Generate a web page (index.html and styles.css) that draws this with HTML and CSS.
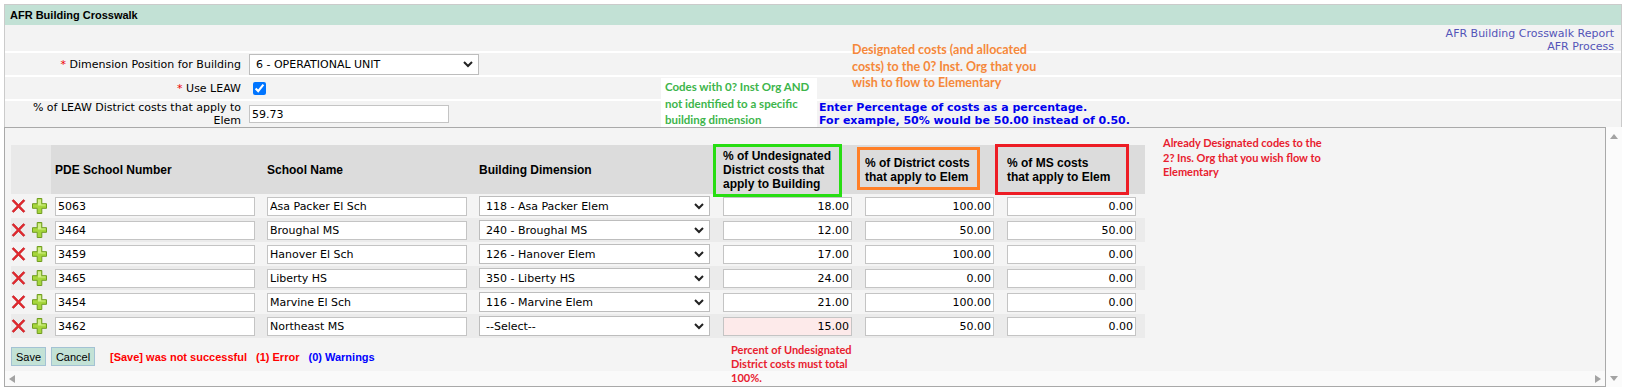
FILE: index.html
```html
<!DOCTYPE html>
<html lang="en">
<head>
  <meta charset="UTF-8" />
  <meta name="viewport" content="width=device-width, initial-scale=1.0"/>
  <title>AFR Building Crosswalk</title>
  <link rel="stylesheet" href="styles.css">
</head>
<body>
  <div class="page">

    <!-- Top form -->
    <div class="top">
      <div class="title">AFR Building Crosswalk</div>
      <div class="links">
        <a href="#">AFR Building Crosswalk Report</a><br>
        <a href="#">AFR Process</a>
      </div>
      <div class="frow row-sel">
        <label class="flabel"><span class="req">*</span> Dimension Position for Building</label>
        <div class="fctl">
          <div class="sel sel-wide">
            <select><option>6 - OPERATIONAL UNIT</option></select>
            <svg class="chev" width="10" height="7" viewBox="0 0 10 7"><polyline points="1,1 5,5 9,1" fill="none" stroke="#222" stroke-width="2"/></svg>
          </div>
        </div>
      </div>
      <div class="frow row-chk">
        <label class="flabel"><span class="req">*</span> Use LEAW</label>
        <div class="fctl"><input type="checkbox" checked></div>
      </div>
      <div class="frow row-pct">
        <label class="flabel">% of LEAW District costs that apply to Elem</label>
        <div class="fctl"><input type="text" class="txt leaw" value="59.73"></div>
        <div class="hint">Enter Percentage of costs as a percentage.<br>For example, 50% would be 50.00 instead of 0.50.</div>
      </div>
    </div>

    <!-- Grid -->
    <div class="grid-section">
      <div class="grid">
        <table class="grid-table">
          <colgroup>
            <col style="width:40px"><col style="width:212px"><col style="width:212px"><col style="width:244px">
            <col style="width:142px"><col style="width:142px"><col style="width:142px">
          </colgroup>
          <thead>
            <tr>
              <th class="th-icons"></th>
              <th>PDE School Number</th>
              <th>School Name</th>
              <th>Building Dimension</th>
              <th>% of Undesignated<br>District costs that<br>apply to Building</th>
              <th>% of District costs<br>that apply to Elem</th>
              <th>% of MS costs<br>that apply to Elem</th>
            </tr>
          </thead>
          <tbody id="rows"></tbody>
        </table>

        <div class="actions">
          <button class="btn btn-save">Save</button>
          <button class="btn btn-cancel">Cancel</button>
          <span class="msg">
            <span class="err">[Save] was not successful</span>
            <span class="err">(1) Error</span>
            <span class="warn">(0) Warnings</span>
          </span>
        </div>

        <div class="hscroll">
          <span class="tri tri-left"></span>
          <span class="tri tri-right"></span>
        </div>
      </div>
      <div class="vscroll">
        <span class="tri tri-up"></span>
        <span class="tri tri-down"></span>
      </div>
    </div>

    <!-- annotations pasted over the screen -->
    <div class="note note-orange">Designated costs (and allocated<br>costs) to the 0? Inst. Org that you<br>wish to flow to Elementary</div>
    <div class="note note-green">Codes with 0? Inst Org AND<br>not identified to a specific<br>building dimension</div>
    <div class="note note-red">Already Designated codes to the<br>2? Ins. Org that you wish flow to<br>Elementary</div>
    <div class="note note-error">Percent of Undesignated<br>District costs must total<br>100%.</div>
    <div class="hbox hbox-green"></div>
    <div class="hbox hbox-orange"></div>
    <div class="hbox hbox-red"></div>
  </div>

  <script>
    const rows = [
      ['5063', 'Asa Packer El Sch', '118 - Asa Packer Elem', '18.00', '100.00', '0.00'],
      ['3464', 'Broughal MS', '240 - Broughal MS', '12.00', '50.00', '50.00'],
      ['3459', 'Hanover El Sch', '126 - Hanover Elem', '17.00', '100.00', '0.00'],
      ['3465', 'Liberty HS', '350 - Liberty HS', '24.00', '0.00', '0.00'],
      ['3454', 'Marvine El Sch', '116 - Marvine Elem', '21.00', '100.00', '0.00'],
      ['3462', 'Northeast MS', '--Select--', '15.00', '50.00', '0.00']
    ];

    const delIcon = '<svg width="15" height="14" viewBox="0 0 15 14"><path d="M1 1.8 L2.6 0.6 L7.5 5.6 L12.4 0.6 L14 1.8 L8.9 7 L14 12.2 L12.4 13.4 L7.5 8.4 L2.6 13.4 L1 12.2 L6.1 7 Z" fill="#e3282e" stroke="#b8161c" stroke-width="0.5"/></svg>';
    const addIcon = '<svg width="15" height="16" viewBox="0 0 15 16"><path d="M5.2 0.5 H9.8 V5.7 H14.5 V10.3 H9.8 V15.5 H5.2 V10.3 H0.5 V5.7 H5.2 Z" fill="#a6d63c" stroke="#6f9c1f" stroke-width="1"/><path d="M6 1.5 H9 V6.5 H13.5 V7.6 H6 Z" fill="#d2ef8a"/></svg>';
    const chev = '<svg class="chev" width="10" height="7" viewBox="0 0 10 7"><polyline points="1,1 5,5 9,1" fill="none" stroke="#222" stroke-width="2"/></svg>';

    const tbody = document.getElementById('rows');
    rows.forEach((r, i) => {
      const tr = document.createElement('tr');
      const bad = i === rows.length - 1 ? ' bad' : '';
      tr.innerHTML =
        '<td><div class="icons">' + delIcon + addIcon + '</div></td>' +
        '<td><input type="text" class="txt cell-txt" value="' + r[0] + '"></td>' +
        '<td><input type="text" class="txt cell-txt" value="' + r[1] + '"></td>' +
        '<td><div class="sel sel-cell"><select><option>' + r[2] + '</option></select>' + chev + '</div></td>' +
        '<td><input type="text" class="txt num' + bad + '" value="' + r[3] + '"></td>' +
        '<td><input type="text" class="txt num" value="' + r[4] + '"></td>' +
        '<td><input type="text" class="txt num" value="' + r[5] + '"></td>';
      tbody.appendChild(tr);
    });
  </script>
</body>
</html>
```

FILE: styles.css
```css
body {
  margin: 0;
  font-family: "DejaVu Sans", Verdana, sans-serif;
  font-size: 11px;
  color: #000;
  background: #fff;
}

.page {
  position: relative;
  margin: 4px 4px 0 4px;
}

/* top form */
.top {
  border: 1px solid #cbcbcb;
  border-bottom: none;
  background: #f3f3f3;
}

.title {
  height: 20px;
  line-height: 20px;
  padding-left: 5px;
  background: #c2e1d5;
  font-family: "Liberation Sans", Arial, sans-serif;
  font-weight: bold;
  font-size: 11px;
}

.links {
  height: 24px;
  padding: 2px 7px 0 0;
  text-align: right;
  line-height: 13px;
}

.links a {
  color: #5353b8;
  text-decoration: none;
}

.frow {
  display: grid;
  grid-template-columns: 244px 570px auto;
  align-items: center;
  border-top: 2px solid #fff;
}

.row-sel, .row-chk {
  height: 22px;
}

.row-pct {
  height: 26px;
}

.flabel {
  text-align: right;
  padding-right: 8px;
  line-height: 13px;
}

.req {
  color: #e00;
}

.fctl {
  display: flex;
  align-items: center;
}

.fctl input[type="checkbox"] {
  width: 13px;
  height: 13px;
  margin: 0 0 0 4px;
  accent-color: #0075ff;
}

.hint {
  color: #0000ee;
  font-weight: bold;
  line-height: 13px;
  white-space: nowrap;
}

/* inputs */
.txt {
  box-sizing: border-box;
  height: 19px;
  border: 1px solid #c4c4c4;
  padding: 0 2px;
  font-family: "DejaVu Sans", Verdana, sans-serif;
  font-size: 11px;
  color: #000;
  background: #fff;
  outline: none;
}

.leaw {
  width: 200px;
  height: 18px;
}

.cell-txt {
  width: 200px;
  display: block;
}

.num {
  width: 129px;
  text-align: right;
  display: block;
}

.num.bad {
  background: #fdeaea;
}

.sel {
  position: relative;
  display: inline-block;
}

.sel select {
  appearance: none;
  -webkit-appearance: none;
  box-sizing: border-box;
  border: 1px solid #bdbdbd;
  border-radius: 0;
  background: #fff;
  padding: 0 0 0 6px;
  font-family: "DejaVu Sans", Verdana, sans-serif;
  font-size: 11px;
  color: #000;
  display: block;
}

.sel-wide select {
  width: 230px;
  height: 21px;
}

.sel-cell select {
  width: 231px;
  height: 20px;
}

.chev {
  position: absolute;
  right: 6px;
  top: 7px;
  pointer-events: none;
}

/* grid */
.grid-section {
  display: flex;
}

.grid {
  flex: 1;
  border: 1px solid #a9a9a9;
  background: #f4f4f4;
  padding-top: 17px;
}

.grid-table {
  margin-left: 6px;
  border-collapse: collapse;
  table-layout: fixed;
  width: 1134px;
}

.grid-table th {
  height: 49px;
  padding: 0 4px;
  background: #dcdcdc;
  text-align: left;
  vertical-align: middle;
  font-family: "Liberation Sans", Arial, sans-serif;
  font-size: 12px;
  font-weight: bold;
  line-height: 14px;
}

.grid-table th.th-icons {
  background: #e9e9e9;
}

.grid-table td {
  height: 24px;
  padding: 0 4px;
  vertical-align: middle;
}

.grid-table td:first-child {
  padding: 0;
}

.grid-table tbody tr:nth-child(even) td {
  background: #ebebeb;
}

.icons {
  display: flex;
  align-items: center;
  gap: 6px;
}

.actions {
  display: flex;
  align-items: center;
  margin: 9px 0 0 6px;
  height: 19px;
}

.btn {
  box-sizing: border-box;
  height: 19px;
  padding: 0;
  border: 1px solid #a3c2d4;
  background: #c3e2d6;
  font-family: "Liberation Sans", Arial, sans-serif;
  font-size: 11px;
  color: #000;
}

.btn-save {
  width: 35px;
}

.btn-cancel {
  width: 44px;
  margin-left: 5px;
}

.msg {
  margin-left: 15px;
  font-family: "Liberation Sans", Arial, sans-serif;
  font-weight: bold;
  font-size: 11px;
}

.msg .err {
  color: #ff0000;
  margin-right: 6px;
}

.msg .warn {
  color: #0000ff;
}

.hscroll {
  display: flex;
  justify-content: space-between;
  align-items: center;
  height: 15px;
  margin-top: 5px;
  padding: 0 4px;
  background: #fafafa;
}

.vscroll {
  width: 16px;
  background: #fbfbfb;
  display: flex;
  flex-direction: column;
  justify-content: space-between;
  align-items: center;
  padding: 7px 0 6px;
}

.tri {
  width: 0;
  height: 0;
}

.tri-left {
  border-top: 4px solid transparent;
  border-bottom: 4px solid transparent;
  border-right: 6px solid #a3a3a3;
}

.tri-right {
  border-top: 4px solid transparent;
  border-bottom: 4px solid transparent;
  border-left: 6px solid #a3a3a3;
}

.tri-up {
  border-left: 4px solid transparent;
  border-right: 4px solid transparent;
  border-bottom: 5px solid #a3a3a3;
}

.tri-down {
  border-left: 4px solid transparent;
  border-right: 4px solid transparent;
  border-top: 5px solid #a3a3a3;
}

/* annotations */
.note {
  position: absolute;
  font-family: Lato, "Liberation Sans", sans-serif;
  font-weight: bold;
  white-space: nowrap;
}

.note-orange {
  left: 848px;
  top: 38px;
  font-size: 12.5px;
  line-height: 16.5px;
  color: #f5883a;
}

.note-green {
  left: 657px;
  top: 74px;
  width: 152px;
  height: 48px;
  padding: 1px 0 0 4px;
  background: #fff;
  font-size: 11.5px;
  line-height: 16.5px;
  color: #3db54b;
}

.note-red {
  left: 1159px;
  top: 132px;
  font-size: 11px;
  line-height: 14.5px;
  color: #e8202e;
}

.note-error {
  left: 727px;
  top: 339px;
  font-size: 11px;
  line-height: 14px;
  color: #e8202e;
}

.hbox {
  position: absolute;
  box-sizing: border-box;
  border: 3px solid;
}

.hbox-green {
  left: 709px;
  top: 140px;
  width: 129px;
  height: 53px;
  border-color: #27dd12;
}

.hbox-orange {
  left: 853px;
  top: 143px;
  width: 123px;
  height: 43px;
  border-color: #ff7f27;
}

.hbox-red {
  left: 991px;
  top: 140px;
  width: 134px;
  height: 51px;
  border-color: #ed1c24;
}
```
